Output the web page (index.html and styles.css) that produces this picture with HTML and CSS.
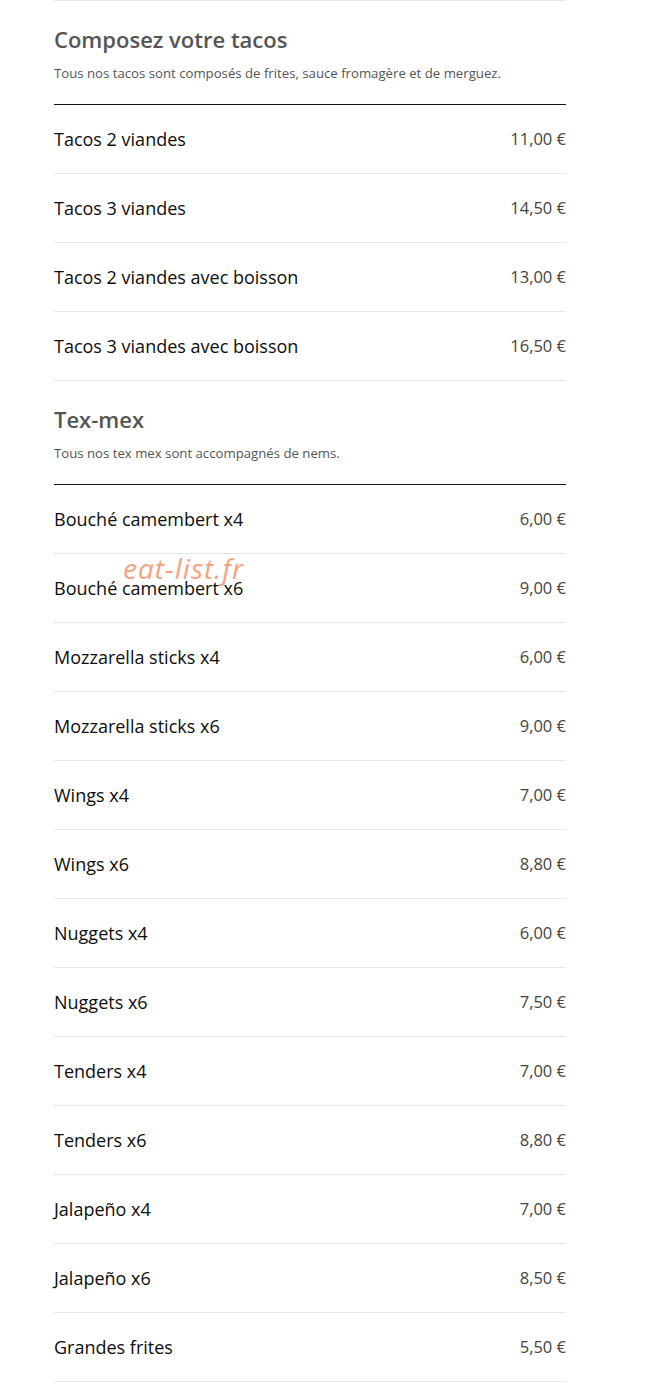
FILE: index.html
```html
<!DOCTYPE html>
<html lang="fr">
<head>
<meta charset="utf-8">
<title>Menu</title>
<link rel="stylesheet" href="styles.css">
</head>
<body>
<div class="page">
  <div class="menu">
    <div class="top-rule"></div>
    <section class="section">
      <div class="section-head">
        <h2 class="section-title">Composez votre tacos</h2>
        <p class="section-desc">Tous nos tacos sont composés de frites, sauce fromagère et de merguez.</p>
      </div>
      <ul class="items">
        <li class="item"><span class="name">Tacos 2 viandes</span><span class="price">11,00 €</span></li>
        <li class="item"><span class="name">Tacos 3 viandes</span><span class="price">14,50 €</span></li>
        <li class="item"><span class="name">Tacos 2 viandes avec boisson</span><span class="price">13,00 €</span></li>
        <li class="item"><span class="name">Tacos 3 viandes avec boisson</span><span class="price">16,50 €</span></li>
      </ul>
    </section>
    <section class="section">
      <div class="section-head">
        <h2 class="section-title">Tex-mex</h2>
        <p class="section-desc">Tous nos tex mex sont accompagnés de nems.</p>
      </div>
      <ul class="items">
        <li class="item"><span class="name">Bouché camembert x4</span><span class="price">6,00 €</span></li>
        <li class="item"><span class="name">Bouché camembert x6</span><span class="price">9,00 €</span></li>
        <li class="item"><span class="name">Mozzarella sticks x4</span><span class="price">6,00 €</span></li>
        <li class="item"><span class="name">Mozzarella sticks x6</span><span class="price">9,00 €</span></li>
        <li class="item"><span class="name">Wings x4</span><span class="price">7,00 €</span></li>
        <li class="item"><span class="name">Wings x6</span><span class="price">8,80 €</span></li>
        <li class="item"><span class="name">Nuggets x4</span><span class="price">6,00 €</span></li>
        <li class="item"><span class="name">Nuggets x6</span><span class="price">7,50 €</span></li>
        <li class="item"><span class="name">Tenders x4</span><span class="price">7,00 €</span></li>
        <li class="item"><span class="name">Tenders x6</span><span class="price">8,80 €</span></li>
        <li class="item"><span class="name">Jalapeño x4</span><span class="price">7,00 €</span></li>
        <li class="item"><span class="name">Jalapeño x6</span><span class="price">8,50 €</span></li>
        <li class="item"><span class="name">Grandes frites</span><span class="price">5,50 €</span></li>
      </ul>
    </section>
    <div class="watermark">eat-list.fr</div>
  </div>
</div>
</body>
</html>
```
FILE: styles.css
```css
html, body {
  margin: 0;
  padding: 0;
  background: #fff;
}
body {
  font-family: "Open Sans", "Noto Sans", sans-serif;
  color: #111;
}
.page {
  padding-left: 54px;
}
.menu {
  position: relative;
  width: 512px;
}
.top-rule {
  height: 0;
  border-bottom: 1px solid #e6e6e6;
}
.section-head {
  padding: 23px 0 22px;
  border-bottom: 1px solid #111;
}
.section-title {
  margin: 0;
  font-size: 22px;
  line-height: 30px;
  font-weight: 600;
  color: #555;
}
.section-desc {
  margin: 11px 0 0;
  font-size: 13.2px;
  line-height: 17px;
  color: #555;
}
.items {
  list-style: none;
  margin: 0;
  padding: 0;
}
.item {
  display: flex;
  justify-content: space-between;
  align-items: center;
  height: 68px;
  border-bottom: 1px solid #e6e6e6;
}
.name {
  font-size: 18px;
  line-height: 24px;
  font-weight: 400;
  color: #0d0d0d;
}
.price {
  font-size: 16.5px;
  line-height: 24px;
  font-weight: 400;
  color: #444;
}
.watermark {
  position: absolute;
  left: 69px;
  top: 550px;
  font-size: 28px;
  line-height: 36px;
  letter-spacing: 1px;
  font-style: italic;
  color: #f5a37f;
  pointer-events: none;
}
```
